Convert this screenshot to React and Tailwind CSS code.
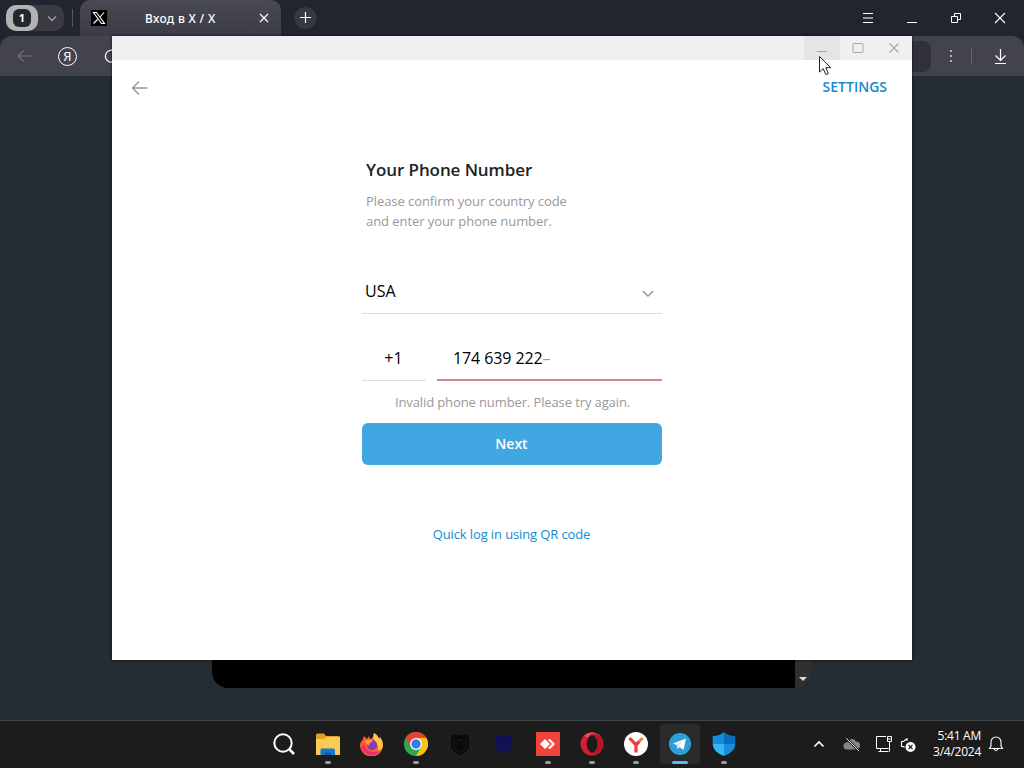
import React, { useState } from 'react'

function Sketch({ w = 24, h = 24, className = '', children }) {
    return (
        <svg width={w} height={h} viewBox={`0 0 ${w} ${h}`} fill="none" stroke="currentColor" className={`shrink-0 ${className}`}>
            {children}
        </svg>
    )
}

function TabBar() {
    return (
        <div className="flex h-9 shrink-0 bg-[#22242f] text-white">
            {/* Tab group */}
            <div className="flex w-20 items-center pl-1.5">
                <div className="flex h-[26px] w-[58px] items-center rounded-[10px] bg-[#3a3b43]">
                    <div className="flex h-[26px] w-8 items-center justify-center rounded-[10px] bg-[#b2b3b5]">
                        <div className="flex h-[18px] w-[18px] items-center justify-center rounded-md bg-[#25282c] text-[11px] font-bold">1</div>
                    </div>
                    <Sketch w={26} h={20} className="text-[#a2a3a9]">
                        <path d="M10 8.5l4 4 4-4" strokeWidth="1.3" />
                    </Sketch>
                </div>
                <div className="ml-2 h-[18px] w-px bg-[#55565e]"></div>
            </div>

            {/* Active tab */}
            <div className="flex h-9 w-[201px] items-center rounded-t-[10px] bg-linear-to-b from-[#484952] to-[#3b3c46]">
                <Sketch w={16} h={16} className="ml-[11px] bg-black">
                    <path d="M2.5 2.5h3l8 11h-3zM13 2.5L9 7M6.5 9.5l-4 4" strokeWidth="1.1" />
                </Sketch>
                <p className="ml-[38px] w-[94px] whitespace-nowrap pt-px font-['Noto_Sans'] text-xs font-medium tracking-[0.3px]">Вход в X / X</p>
                <Sketch w={14} h={14} className="ml-[18px]">
                    <path d="M3 3l8 8M11 3l-8 8" strokeWidth="1.2" />
                </Sketch>
            </div>
            <div className="flex items-center pl-[13px]">
                <Sketch>
                    <circle cx="11.5" cy="12" r="11" fill="#373840" stroke="none" />
                    <path d="M11.5 6v11M6 11.5h11" strokeWidth="1.2" />
                </Sketch>
            </div>

            {/* Window buttons */}
            <div className="ml-auto flex items-center pr-4">
                <Sketch w={16} h={16} className="mr-7">
                    <path d="M3 3.5h10M3 8h10M3 12.5h10" strokeWidth="1.1" />
                </Sketch>
                <Sketch w={16} h={16} className="mr-7">
                    <path d="M3 12.5h10" />
                </Sketch>
                <Sketch w={16} h={16} className="mr-7">
                    <path d="M3.5 6.5h6v6h-6zM6.5 6.5v-3h6v6h-3" />
                </Sketch>
                <Sketch w={16} h={16}>
                    <path d="M3 3l10 10M13 3L3 13" strokeWidth="1.1" />
                </Sketch>
            </div>
        </div>
    )
}

function Toolbar() {
    return (
        <div className="h-10 shrink-0 bg-[#22242f]">
            <div className="flex h-10 items-center rounded-t-xl bg-[#42434f] text-white">
                <Sketch w={20} h={20} className="ml-3.5 text-[#73747e]">
                    <path d="M17 10H4M9.5 4.5L4 10l5.5 5.5" strokeWidth="1.1" />
                </Sketch>
                <div className="ml-6 flex h-[19px] w-[19px] items-center justify-center rounded-full border border-white font-['Noto_Sans'] text-[13px] leading-none">Я</div>
                <Sketch w={20} h={20} className="ml-6">
                    <path d="M12 16a6 6 0 1 1 4-8M16 4v4h-4" strokeWidth="1.2" />
                </Sketch>
                <div className="ml-[17px] h-[31px] w-[793px] rounded-lg bg-[#30313b]"></div>
                <Sketch w={8} h={20} className="ml-4 text-[#d0d0d5]">
                    <path d="M4 4v2M4 9v2M4 14v2" strokeWidth="1.6" />
                </Sketch>
                <div className="ml-4 h-4 w-px bg-[#646570]"></div>
                <Sketch w={20} h={20} className="ml-[19px]">
                    <path d="M9.5 3v11M4.5 9.5l5 5 5-5M4 17.5h11" strokeWidth="1.2" />
                </Sketch>
            </div>
        </div>
    )
}

function PhoneWindow() {
    const [code, setCode] = useState('+1')

    return (
        <div className="absolute left-28 top-9 flex h-[624px] w-[800px] flex-col bg-white font-['Open_Sans'] shadow-[0_0_2px_1px_rgba(0,0,0,0.35)]">
            <div className="flex h-6 shrink-0 justify-end bg-[#f0f0f0] text-[#a5a5a5]">
                <Sketch w={36} h={24} className="bg-[#e5e5e5]">
                    <path d="M13 15.5h10" />
                </Sketch>
                <Sketch w={36} h={24}>
                    <rect x="13" y="7.5" width="10" height="9" rx="1" />
                </Sketch>
                <Sketch w={36} h={24}>
                    <path d="M13.5 7.5l9 9M22.5 7.5l-9 9" strokeWidth="1.1" />
                </Sketch>
            </div>

            <div className="flex h-14 shrink-0 items-center justify-between pl-[18px] pr-[25px]">
                <Sketch w={20} h={20} className="text-[#999]">
                    <path d="M17.5 10h-15M9 3.5L2.5 10 9 16.5" strokeWidth="1.4" />
                </Sketch>
                <p className="whitespace-nowrap pb-0.5 text-sm font-semibold leading-5 text-[#168acd]">SETTINGS</p>
            </div>

            <div className="mx-auto flex w-[300px] flex-col pt-[42px]">
                <h1 className="whitespace-nowrap pl-1 text-[17px] font-semibold leading-6 tracking-[-0.09px] text-[#222]">Your Phone Number</h1>
                <p className="mt-[9px] whitespace-nowrap pl-1 text-[13px] leading-5 tracking-[-0.07px] text-[#999]">
                    Please confirm your country code<br />
                    and enter your phone number.
                </p>

                <div className="mt-[38px] flex h-[45px] items-start justify-between border-b border-[#dedede] pl-[3px] pr-2 pt-[10px] text-base leading-6">
                    <span>USA</span>
                    <Sketch w={12} h={24} className="mt-[2px] text-[#999]">
                        <path d="M.8 10l5.2 5 5.2-5" strokeWidth="1.6" />
                    </Sketch>
                </div>

                <div className="mt-5 flex h-12 items-start justify-between text-base leading-6">
                    <input
                        value={code}
                        onChange={(e) => setCode(e.target.value)}
                        className="h-[47px] w-16 border-b border-[#dedede] pb-[10px] pr-px pt-3 text-center outline-none"
                    />
                    <p className="h-[47px] w-[225px] whitespace-nowrap border-b-2 border-[#d1848b] pl-4 pt-3 tracking-[-0.1px]">
                        174 639 222<span className="text-[#999]">–</span>
                    </p>
                </div>
                <p className="mt-[10px] whitespace-nowrap pl-px text-center text-[13px] leading-5 tracking-[-0.11px] text-[#999]">Invalid phone number. Please try again.</p>
                <button className="mt-[11px] h-[42px] rounded-md bg-[#40a7e3] pr-px text-sm font-semibold text-white">Next</button>
                <button className="mt-[59px] whitespace-nowrap pr-px text-[13px] leading-5 tracking-[-0.12px] text-[#168acd]">Quick log in using QR code</button>
            </div>
        </div>
    )
}

function TaskItem({ running, active, children }) {
    return (
        <div className={`mx-0.5 flex h-10 w-10 flex-col items-center rounded pt-2 ${active ? 'bg-[#2a2b2c]' : ''}`}>
            {children}
            {running && <div className={`mt-[5px] h-[3px] rounded-full ${active ? 'w-4 bg-[#58bdf0]' : 'w-1.5 bg-[#9a9a9a]'}`}></div>}
        </div>
    )
}

function Taskbar() {
    return (
        <div className="flex h-12 shrink-0 border-t border-[#41474b] bg-[#1c1c1c] pl-[262px] pt-[3px] text-white">
            <TaskItem>
                <Sketch>
                    <circle cx="11" cy="11" r="8.7" strokeWidth="2" />
                    <path d="M17.5 17.5l4.5 4.5" strokeWidth="2.5" />
                </Sketch>
            </TaskItem>
            <TaskItem running>
                <Sketch className="stroke-none">
                    <path d="M0 3q0-1.500 1.500-1.500H8L10 4h12.500Q24 4 24 5.500V22q0 1-1 1H1q-1 0-1-1z" fill="#e2a01d" />
                    <path d="M0 7h8l2-2h14v17q0 1-1 1H1q-1 0-1-1z" fill="#f8cb55" />
                    <path d="M4.500 23v-5q0-1.500 1.500-1.500h11q2 0 2 1.500v5z" fill="#1778c7" />
                    <path d="M8.500 23v-2.500h6V23z" fill="#0d569b" />
                </Sketch>
            </TaskItem>
            <TaskItem>
                <Sketch className="stroke-none">
                    <path d="M3 7l1-3 3 3 2-3 1 3q4-1 4-6 4 2 5 6l1-2q3 4 3 8a11.500 11.500 0 0 1-23 0q0-3 3-6z" fill="#ff5a36" />
                    <path d="M14 1q4 2 5 6l1-2q3 4 3 8-1 7-7 9 5-7-1-13-3-3-1-8z" fill="#ffc83d" />
                    <path d="M1 15q3 8 11 8 7 0 10-7-3 4-8 4-8 0-10-8z" fill="#ed2c6b" />
                    <circle cx="12" cy="13" r="5" fill="#853bbf" />
                    <path d="M5 9q4-3 8 0l-3 2q-2 1 0 3-4-1-5-5z" fill="#ff9d35" />
                </Sketch>
            </TaskItem>
            <TaskItem running>
                <Sketch className="stroke-none">
                    <circle cx="12" cy="12" r="12" fill="#2da94f" />
                    <path d="M1.600 6A12 12 0 0 1 22.400 6H12L6.800 15z" fill="#e94335" />
                    <path d="M22.400 6A12 12 0 0 1 12 24l5.200-9L12 6z" fill="#fbc116" />
                    <circle cx="12" cy="12" r="6" fill="white" />
                    <circle cx="12" cy="12" r="4.700" fill="#337fe8" />
                </Sketch>
            </TaskItem>
            <TaskItem>
                <Sketch className="text-[#060606]">
                    <path d="M4 4h16v10q-1 6-8 8-7-2-8-8z" fill="#131313" strokeWidth="1.500" />
                    <path d="M6 6h12M8 7v8l4 4 4-4V7M11 9v8M13 9v8" strokeWidth="1.500" />
                </Sketch>
            </TaskItem>
            <TaskItem>
                <Sketch className="stroke-none">
                    <path d="M4 4h16v12q-2 4-8 5-6-1-8-5z" fill="#10105a" />
                    <path d="M7 7h3v9H7zM14 7h3v9h-3z" fill="#151547" />
                </Sketch>
            </TaskItem>
            <TaskItem running>
                <Sketch className="bg-[#ef443b] stroke-none">
                    <path d="M4 12l5-5 5 5-5 5zM12 8l2-1 5 5-5 5-2-1 4-4z" fill="white" />
                </Sketch>
            </TaskItem>
            <TaskItem running>
                <Sketch className="stroke-none">
                    <circle cx="12" cy="12" r="11.500" fill="#d51e36" />
                    <path d="M4 4Q8 0 13 .600q8 1 10 8-2-6-7-6-5-2-8 3z" fill="#f24b5b" />
                    <path d="M16 2q7 3 7 10t-7 10q-4 1-7-2 8 0 8-8t-8-8q3-3 7-2z" fill="#b31429" />
                    <ellipse cx="12" cy="12" rx="5.400" ry="8.500" fill="#1c1c1c" />
                </Sketch>
            </TaskItem>
            <TaskItem running>
                <Sketch>
                    <circle cx="12" cy="12" r="12" fill="white" stroke="none" />
                    <path d="M5.500 6l6.500 7v7.500" stroke="#f33b2f" strokeWidth="3.200" />
                    <path d="M12 13l6.500-7" stroke="#f18a2e" strokeWidth="3.200" />
                    <path d="M12 13l3-3.500" stroke="#db3476" strokeWidth="3.200" />
                </Sketch>
            </TaskItem>
            <TaskItem running active>
                <Sketch className="stroke-none">
                    <circle cx="12" cy="12" r="11" fill="#2f9fd4" />
                    <path d="M5 11.500L18 6.500 15.500 18l-4-3-2 2-.8-4z" fill="white" />
                    <path d="M8.700 13l6.500-4.500-4.500 5-.7 3z" fill="#b6d9ea" />
                </Sketch>
            </TaskItem>
            <TaskItem running>
                <Sketch className="stroke-none">
                    <path d="M12 0v12H.700V4Q8 4 12 0z" fill="#168bdd" />
                    <path d="M12 0v12h11.300V4Q16 4 12 0z" fill="#0b6dba" />
                    <path d="M.700 12H12v12Q1 20 .700 12z" fill="#36b7f2" />
                    <path d="M23.300 12H12v12q11-4 11.300-12z" fill="#168dda" />
                </Sketch>
            </TaskItem>

            {/* System tray */}
            <div className="ml-auto flex h-10 items-center pr-5">
                <Sketch w={16} h={16} className="mr-4">
                    <path d="M3.500 10.500l4.500-4.500 4.500 4.500" strokeWidth="1.600" />
                </Sketch>
                <Sketch w={18} h={16} className="mr-[14px] text-[#858585]">
                    <path d="M4 13.500a3.500 3.500 0 0 1 0-7 5 5 0 0 1 9-1 4 4 0 0 1 0 8z" fill="currentColor" stroke="none" />
                    <path d="M3 2l13 13" stroke="#1c1c1c" strokeWidth="2.200" />
                    <path d="M3 2l13 13" stroke="#ddd" />
                </Sketch>
                <Sketch w={18} h={18} className="mr-[7px]">
                    <path d="M11 1.500H1.500v12h12M5.500 13.500v3M3.500 16.500h10M12.500 1.500h4v5h-4zM12.500 4h4M14.500 6.500v10" />
                </Sketch>
                <Sketch w={18} h={18} className="mr-[13px]">
                    <path d="M7 3.500L3.500 6.500H1.500v5h2l1 1M7 3v3" strokeWidth="1.100" />
                    <circle cx="10.500" cy="12" r="5" fill="white" stroke="none" />
                    <path d="M8.500 10l4 4M12.500 10l-4 4" stroke="#1c1c1c" strokeWidth="1.100" />
                </Sketch>
                <div className="w-[50px] whitespace-nowrap text-right font-['Open_Sans'] text-xs leading-4 tracking-[-0.25px]">
                    <p>5:41 AM</p>
                    <p>3/4/2024</p>
                </div>
                <Sketch w={16} h={16} className="ml-[7px]">
                    <path d="M1.500 12.500h13L13 10V6A5 5 0 0 0 3 6v4zM6 13q2 3 4 0" strokeWidth="1.100" />
                </Sketch>
            </div>
        </div>
    )
}

export default function App() {
    return (
        <div className="relative flex h-[768px] w-[1024px] flex-col overflow-hidden bg-[#252d34] font-['Open_Sans',sans-serif]">
            <TabBar />
            <Toolbar />

            {/* Page behind the window */}
            <div className="flex min-h-0 flex-1 flex-col justify-end pb-8">
                <div className="mx-auto flex h-[540px] w-[600px] overflow-hidden rounded-2xl bg-black">
                    <div className="ml-auto flex w-[17px] items-end bg-[#303030]">
                        <Sketch w={17} h={17} className="stroke-none">
                            <path d="M4 6h8l-4 4z" fill="#ddd" />
                        </Sketch>
                    </div>
                </div>
            </div>

            <Taskbar />
            <PhoneWindow />

            {/* Mouse pointer */}
            <svg width="13" height="20" viewBox="0 0 13 20" className="absolute left-[819px] top-14">
                <path d="M.5.5v15.500l3.700-3.400 2.600 6 2.500-1-2.500-5.900h5z" fill="white" stroke="#222" />
            </svg>
        </div>
    )
}
